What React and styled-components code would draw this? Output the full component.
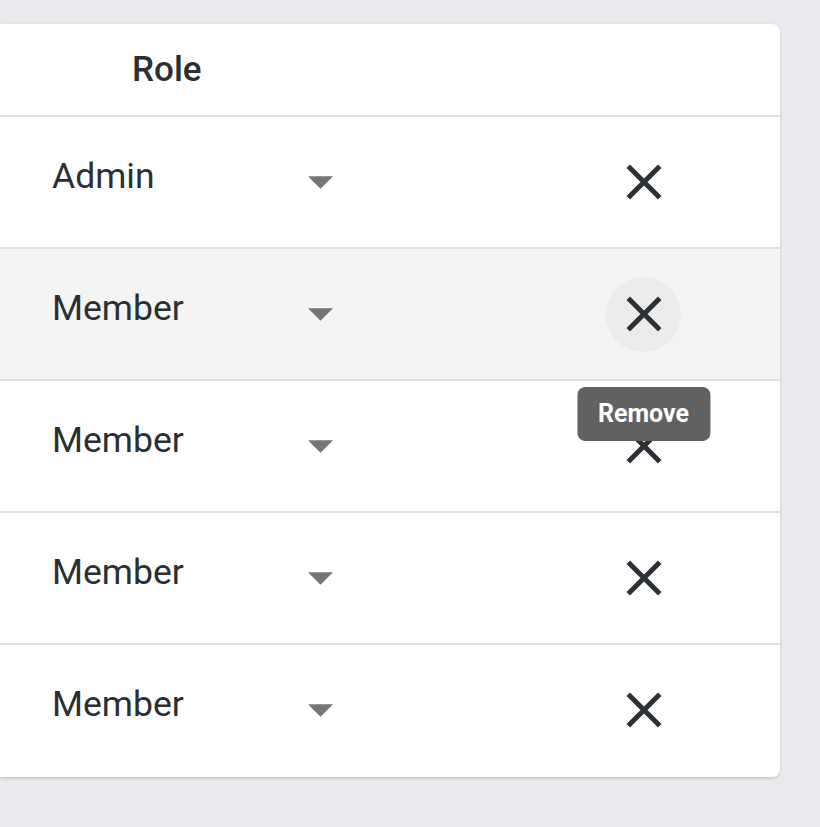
import styled, { createGlobalStyle } from "styled-components";

const GlobalStyle = createGlobalStyle`
  body {
    margin: 0;
    background: #e9eaee;
    font-family: Roboto, "Liberation Sans", sans-serif;
  }
`;

const members = [
  { role: "Admin" },
  { role: "Member", hovered: true },
  { role: "Member" },
  { role: "Member" },
  { role: "Member" },
];

export default function App() {
  return (
    <Page>
      <GlobalStyle />
      <Card>
        <HeaderRow>
          <HeaderCell>Role</HeaderCell>
        </HeaderRow>

        {members.map((m, i) => (
          <Row key={i} $hovered={m.hovered} $last={i === members.length - 1}>
            <RoleSelect>
              <SelectText>{m.role}</SelectText>
              <svg width="25" height="13" viewBox="0 0 10 5">
                <path d="M0 0l5 5 5-5z" fill="#757575" />
              </svg>
            </RoleSelect>

            <ActionWrap>
              <RemoveButton $hovered={m.hovered}>
                <svg width="60" height="60" viewBox="0 0 24 24">
                  <path
                    d="M19 6.41 17.59 5 12 10.59 6.41 5 5 6.41 10.59 12 5 17.59 6.41 19 12 13.41 17.59 19 19 17.59 13.41 12z"
                    fill="#2b3137"
                  />
                </svg>
              </RemoveButton>
              {m.hovered && <Tooltip>Remove</Tooltip>}
            </ActionWrap>
          </Row>
        ))}
      </Card>
    </Page>
  );
}

const Page = styled.div`
  padding: 24px 40px 50px 0;
`;

const Card = styled.div`
  background: #ffffff;
  border-radius: 0 8px 8px 0;
  box-shadow: 0 2px 3px rgba(0, 0, 0, 0.12), 0 0 2px rgba(0, 0, 0, 0.08);
`;

const HeaderRow = styled.div`
  display: flex;
  align-items: center;
  height: 91px;
  padding-left: 132px;
  border-bottom: 2px solid #e0e0e0;
`;

const HeaderCell = styled.div`
  font-size: 35px;
  font-weight: 500;
  color: #2b2f33;
  line-height: 41px;
  padding-bottom: 1px;
`;

const Row = styled.div`
  display: flex;
  align-items: center;
  justify-content: space-between;
  height: 130px;
  padding: 0 99px 0 52px;
  background: ${(p) => (p.$hovered ? "#f4f4f4" : "#ffffff")};
  border-bottom: 2px solid ${(p) => (p.$last ? "transparent" : "#e0e0e0")};
  border-radius: ${(p) => (p.$last ? "0 0 8px 0" : "0")};
`;

const RoleSelect = styled.div`
  display: flex;
  align-items: center;
  justify-content: space-between;
  width: 281px;
`;

const SelectText = styled.span`
  font-size: 35.5px;
  line-height: 41px;
  color: #2b2f33;
  padding-bottom: 12px;
`;

const ActionWrap = styled.div`
  position: relative;
`;

const RemoveButton = styled.button`
  width: 75px;
  height: 75px;
  border: none;
  border-radius: 50%;
  padding: 0;
  display: flex;
  align-items: center;
  justify-content: center;
  background: ${(p) => (p.$hovered ? "#ebebeb" : "transparent")};
  cursor: pointer;
`;

const Tooltip = styled.div`
  position: absolute;
  top: calc(100% + 35px);
  left: 50%;
  transform: translateX(-50%);
  z-index: 2;
  background: #616161;
  color: #ffffff;
  font-size: 25px;
  font-weight: 700;
  line-height: 34px;
  padding: 10px 21px;
  border-radius: 8px;
  white-space: nowrap;
`;
